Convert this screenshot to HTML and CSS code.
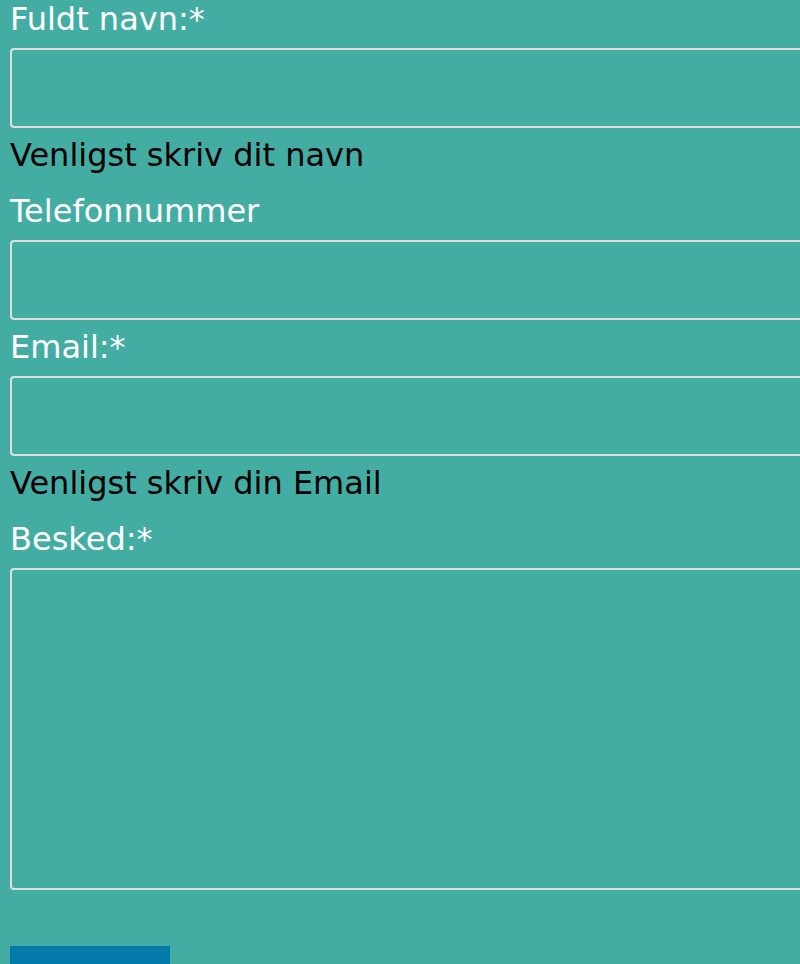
FILE: index.html
```html
<!DOCTYPE html>
<html lang="da">
<head>
<meta charset="utf-8">
<title>Kontakt</title>
<link rel="stylesheet" href="styles.css">
</head>
<body>
<form class="contact-form">
  <label class="field-label" for="name">Fuldt navn:*</label>
  <input class="field-input" id="name" type="text">
  <p class="field-help">Venligst skriv dit navn</p>

  <label class="field-label" for="phone">Telefonnummer</label>
  <input class="field-input" id="phone" type="tel">

  <label class="field-label" for="email">Email:*</label>
  <input class="field-input" id="email" type="email">
  <p class="field-help">Venligst skriv din Email</p>

  <label class="field-label" for="message">Besked:*</label>
  <textarea class="field-input field-textarea" id="message"></textarea>

  <button class="submit-btn" type="submit" aria-label="Send"></button>
</form>
</body>
</html>
```
FILE: styles.css
```css
html, body {
  margin: 0;
  padding: 0;
  background: #43ada4;
  overflow: hidden;
}

body {
  font-family: "DejaVu Sans", "Liberation Sans", sans-serif;
  height: 964px;
}

.contact-form {
  padding: 1px 0 0 10px;
  display: flex;
  flex-direction: column;
  align-items: flex-start;
}

.field-label {
  display: block;
  color: #ffffff;
  font-size: 32px;
  line-height: 36px;
  margin: 0 0 11px 0;
}

.field-input {
  display: block;
  box-sizing: border-box;
  width: 830px;
  height: 80px;
  margin: 0 0 9px 0;
  border: 2px solid #dddddd;
  border-radius: 4px;
  background: transparent;
  padding: 0;
  font: inherit;
}

.field-textarea {
  height: 322px;
  resize: none;
}

.field-help {
  color: #000000;
  font-size: 32px;
  line-height: 36px;
  margin: 0 0 20px 0;
}

.submit-btn {
  margin-top: 47px;
  width: 160px;
  height: 56px;
  border: none;
  border-radius: 0;
  background: #047aab;
  padding: 0;
}
```
